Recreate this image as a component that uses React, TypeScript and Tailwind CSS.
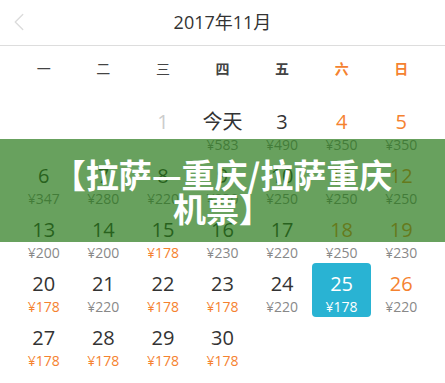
import { ChevronLeft } from 'lucide-react';

type Cell = { d?: string; p?: string; dc?: string; pc?: string; sel?: boolean } | null;

const DARK = 'text-[#333333]';
const OR = 'text-[#f5822f]';
const GRAY = 'text-[#888888]';

const rows: Cell[][] = [
  [null, null, { d: '1', dc: 'text-[#cccccc]' }, { d: '今天', p: '¥583' }, { d: '3', p: '¥490' }, { d: '4', p: '¥350', dc: OR }, { d: '5', p: '¥350', dc: OR }],
  [{ d: '6', p: '¥347' }, { d: '7', p: '¥280' }, { d: '8', p: '¥220' }, { d: '9', p: '¥230' }, { d: '10', p: '¥250' }, { d: '11', p: '¥250', dc: OR }, { d: '12', p: '¥250', dc: OR }],
  [{ d: '13', p: '¥200' }, { d: '14', p: '¥200' }, { d: '15', p: '¥178', pc: OR }, { d: '16', p: '¥230' }, { d: '17', p: '¥220' }, { d: '18', p: '¥250', dc: OR }, { d: '19', p: '¥230', dc: OR }],
  [{ d: '20', p: '¥178', pc: OR }, { d: '21', p: '¥220' }, { d: '22', p: '¥178', pc: OR }, { d: '23', p: '¥178', pc: OR }, { d: '24', p: '¥220' }, { d: '25', p: '¥178', sel: true }, { d: '26', p: '¥220', dc: OR }],
  [{ d: '27', p: '¥178', pc: OR }, { d: '28', p: '¥178', pc: OR }, { d: '29', p: '¥178', pc: OR }, { d: '30', p: '¥178', pc: OR }, null, null, null],
];

const weekdays = ['一', '二', '三', '四', '五', '六', '日'];

export default function App() {
  return (
    <div className="relative w-[445px] h-[383px] bg-white overflow-hidden font-['Open_Sans','Noto_Sans_CJK_SC',sans-serif]">
      {/* Header */}
      <div className="relative h-[46px] flex items-center justify-center border-b border-[#dddddd]">
        <ChevronLeft className="absolute left-[4px] top-[7px] w-[30px] h-[30px] text-[#dcdcdc]" strokeWidth={1.1} />
        <span className="text-[18px] text-[#333333]">2017年11月</span>
      </div>

      {/* Weekdays */}
      <div className="grid grid-cols-7 px-[14px] h-[44px] items-center">
        {weekdays.map((w, i) => (
          <span
            key={w}
            className={`text-center text-[14px] ${i >= 3 ? 'font-semibold' : 'font-normal'} ${i >= 5 ? OR : 'text-[#444444]'}`}
          >
            {w}
          </span>
        ))}
      </div>

      {/* Days */}
      <div className="mt-[11px] px-[14px] flex flex-col">
        {rows.map((r, ri) => (
          <div key={ri} className="grid grid-cols-7 h-[54px]">
            {r.map((c, ci) =>
              c ? (
                <div
                  key={ci}
                  className={`flex flex-col items-center rounded-[4px] ${c.sel ? 'bg-[#29b3d3]' : ''}`}
                >
                  <span
                    className={`mt-[6px] text-[20px] leading-[30px] ${c.sel ? 'text-white' : c.dc ?? DARK}`}
                  >
                    {c.d}
                  </span>
                  {c.p && (
                    <span
                      className={`text-[14px] leading-[14px] mt-[1px] ${c.sel ? 'text-white' : c.pc ?? GRAY}`}
                    >
                      {c.p}
                    </span>
                  )}
                </div>
              ) : (
                <div key={ci} />
              )
            )}
          </div>
        ))}
      </div>

      {/* Overlay banner */}
      <div className="absolute left-0 right-0 top-[139px] h-[103px] bg-[rgba(36,119,22,0.69)] flex items-center justify-center">
        <p className="text-center text-white font-bold text-[33px] leading-[34px] font-['Noto_Sans_CJK_SC',sans-serif]">
          【拉萨—重庆/拉萨重庆
          <br />
          机票】
        </p>
      </div>
    </div>
  );
}
